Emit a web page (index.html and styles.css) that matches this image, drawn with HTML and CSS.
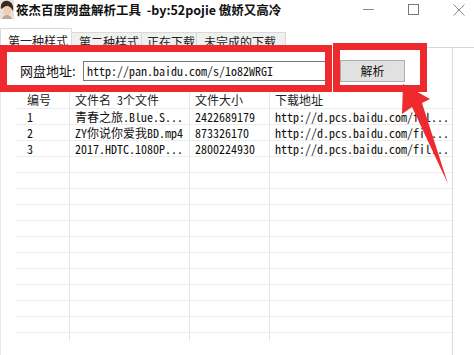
FILE: index.html
```html
<!DOCTYPE html>
<html lang="zh-CN">
<head>
<meta charset="utf-8">
<title>筱杰百度网盘解析工具</title>
<link rel="stylesheet" href="styles.css">
</head>
<body>
<div class="window">
  <div class="titlebar">
    <svg class="avatar" width="14" height="19" viewBox="0 0 14 19">
      <rect width="14" height="19" fill="#e8e2dc"/>
      <path d="M1 9 C0 3 4 0 8 1 C12 2 14 6 13 11 L11 8 C9 6 5 6 3 8 Z" fill="#3a2a22"/>
      <ellipse cx="7" cy="11" rx="4" ry="5" fill="#f1cdb5"/>
      <path d="M2 19 C3 16 5 15 7 15 C9 15 11 16 12 19 Z" fill="#b9a79b"/>
    </svg>
    <span class="title">筱杰百度网盘解析工具&nbsp;&nbsp;-by:52pojie 傲娇又高冷</span>
    <div class="controls">
      <span class="ctl"><svg width="11" height="11" viewBox="0 0 11 11"><line x1="0" y1="5.5" x2="11" y2="5.5" stroke="#8a8a8a" stroke-width="1"/></svg></span>
      <span class="ctl"><svg width="11" height="11" viewBox="0 0 11 11"><rect x="0.5" y="0.5" width="10" height="10" fill="none" stroke="#7a7a7a" stroke-width="1"/></svg></span>
      <span class="ctl"><svg width="12" height="12" viewBox="0 0 12 12"><path d="M0.5 0.5 L11.5 11.5 M11.5 0.5 L0.5 11.5" stroke="#8a8a8a" stroke-width="1"/></svg></span>
    </div>
  </div>

  <div class="tabbar">
    <span class="tab tab-active">第一种样式</span>
    <span class="tab">第二种样式</span>
    <span class="tab">正在下载</span>
    <span class="tab">未完成的下载</span>
  </div>

  <div class="panel">
    <div class="addr">
      <span class="addr-label">网盘地址:</span>
      <div class="addr-input">http://pan.baidu.com/s/1o82WRGI</div>
      <button class="btn">解析</button>
    </div>

    <div class="list">
      <div class="row head">
        <span class="c c1">编号</span><span class="c c2">文件名 3个文件</span><span class="c c3">文件大小</span><span class="c c4">下载地址</span>
      </div>
      <div class="row">
        <span class="c c1">1</span><span class="c c2">青春之旅.Blue.S...</span><span class="c c3">2422689179</span><span class="c c4">http://d.pcs.baidu.com/fil...</span>
      </div>
      <div class="row">
        <span class="c c1">2</span><span class="c c2">ZY你说你爱我BD.mp4</span><span class="c c3">873326170</span><span class="c c4">http://d.pcs.baidu.com/fil...</span>
      </div>
      <div class="row">
        <span class="c c1">3</span><span class="c c2">2017.HDTC.1080P...</span><span class="c c3">2800224930</span><span class="c c4">http://d.pcs.baidu.com/fil...</span>
      </div>
      <div class="row"><span class="c c1"></span><span class="c c2"></span><span class="c c3"></span><span class="c c4"></span></div>
      <div class="row"><span class="c c1"></span><span class="c c2"></span><span class="c c3"></span><span class="c c4"></span></div>
      <div class="row"><span class="c c1"></span><span class="c c2"></span><span class="c c3"></span><span class="c c4"></span></div>
      <div class="row"><span class="c c1"></span><span class="c c2"></span><span class="c c3"></span><span class="c c4"></span></div>
      <div class="row"><span class="c c1"></span><span class="c c2"></span><span class="c c3"></span><span class="c c4"></span></div>
      <div class="row"><span class="c c1"></span><span class="c c2"></span><span class="c c3"></span><span class="c c4"></span></div>
      <div class="row"><span class="c c1"></span><span class="c c2"></span><span class="c c3"></span><span class="c c4"></span></div>
      <div class="row"><span class="c c1"></span><span class="c c2"></span><span class="c c3"></span><span class="c c4"></span></div>
      <div class="row"><span class="c c1"></span><span class="c c2"></span><span class="c c3"></span><span class="c c4"></span></div>
      <div class="row"><span class="c c1"></span><span class="c c2"></span><span class="c c3"></span><span class="c c4"></span></div>
      <div class="row"><span class="c c1"></span><span class="c c2"></span><span class="c c3"></span><span class="c c4"></span></div>
      <div class="row"><span class="c c1"></span><span class="c c2"></span><span class="c c3"></span><span class="c c4"></span></div>
    </div>
  </div>

  <div class="mark mark-addr"></div>
  <div class="mark mark-btn"></div>
  <svg class="arrow" width="474" height="355" viewBox="0 0 474 355">
    <polygon points="403,84 430,99 422,103 448,184 412,107 402,114" fill="#ee2a2e"/>
  </svg>
</div>
</body>
</html>
```

FILE: styles.css
```css
* { box-sizing: border-box; }

html, body {
  margin: 0;
  padding: 0;
  background: #ffffff;
}

body {
  width: 474px;
  height: 355px;
  overflow: hidden;
  font-family: "Noto Sans Mono CJK SC", "Noto Sans CJK SC", "Liberation Mono", monospace;
  font-size: 12px;
  color: #111;
}

.window {
  position: relative;
  width: 474px;
  height: 355px;
  overflow: hidden;
}

.titlebar {
  display: flex;
  align-items: flex-start;
  height: 29px;
}

.avatar {
  display: block;
  flex: none;
}

.title {
  margin-left: 2px;
  font-family: "Noto Sans CJK SC", "Noto Sans", sans-serif;
  font-weight: 700;
  font-size: 12.5px;
  line-height: 19px;
  color: #111;
  white-space: nowrap;
}

.controls {
  display: flex;
  margin-left: auto;
  margin-right: -7px;
}

.ctl {
  width: 45px;
  height: 19px;
  display: flex;
  align-items: center;
  justify-content: center;
}

.ctl svg { display: block; }

.tabbar {
  display: flex;
  align-items: flex-end;
  height: 19px;
  border-bottom: 1px solid #d9d9d9;
  font-family: "Noto Sans CJK SC", sans-serif;
  font-size: 12px;
}

.tab {
  height: 16px;
  margin-bottom: -1px;
  padding: 0 6px;
  line-height: 17px;
  background: #f0f0f0;
  border: 1px solid #d9d9d9;
  border-left: none;
  border-bottom: none;
  color: #222;
  white-space: nowrap;
}

.tab-active {
  height: 20px;
  width: 72px;
  padding-left: 7px;
  line-height: 23px;
  background: #ffffff;
  border-left: 1px solid #d9d9d9;
}

.tab:nth-child(2) { width: 70px; padding-left: 7px; }
.tab:nth-child(3) { width: 55px; padding-left: 5px; }
.tab:nth-child(4) { width: 89px; padding-left: 7px; }

.panel {
  width: 453px;
  height: 307px;
  border-left: 1px solid #e6e6e6;
  border-right: 1px solid #d9d9d9;
}

.addr {
  display: flex;
  align-items: center;
  height: 43px;
  padding-top: 2px;
  padding-left: 19px;
}

.addr-label {
  width: 63px;
  font-family: "Noto Sans CJK SC", sans-serif;
  font-size: 13px;
  color: #111;
}

.addr-input {
  width: 244px;
  height: 20px;
  border: 1px solid #7a7a7a;
  padding-left: 3px;
  line-height: 18px;
  background: #fff;
  white-space: nowrap;
  overflow: hidden;
}

.btn {
  margin-left: 13px;
  width: 65px;
  height: 22px;
  padding: 0;
  background: #e1e1e1;
  border: 1px solid #adadad;
  font-family: "Noto Sans CJK SC", sans-serif;
  font-size: 12px;
  color: #111;
}

.list {
  height: 250px;
  overflow: hidden;
}

.row {
  display: grid;
  grid-template-columns: 54px 120px 80px 182px;
  margin-left: 15px;
  height: 16px;
  border-bottom: 1px solid #ededed;
}

.row.head {
  height: 18px;
}

.c {
  border-right: 1px solid #e6e6e6;
  padding-left: 5px;
  line-height: 15px;
  white-space: nowrap;
  overflow: hidden;
}

.head .c { line-height: 17px; color: #222; }

.c1 { padding-left: 11px; }
.c4 { border-right: none; }

.mark {
  position: absolute;
  border: 7px solid #ee2a2e;
}

.mark-addr {
  left: 0;
  top: 45px;
  width: 332px;
  height: 47px;
}

.mark-btn {
  left: 333px;
  top: 43px;
  width: 94px;
  height: 49px;
}

.arrow {
  position: absolute;
  left: 0;
  top: 0;
  pointer-events: none;
}
```
